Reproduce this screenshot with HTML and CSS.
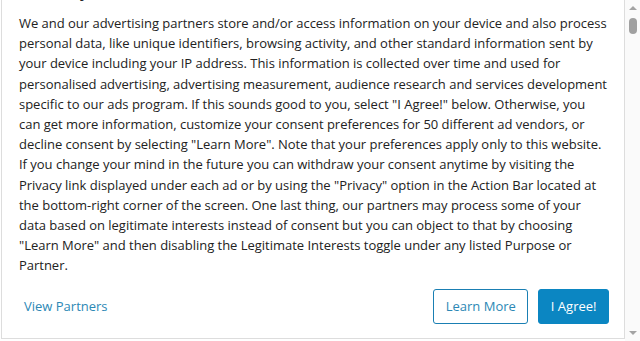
FILE: index.html
```html
<!DOCTYPE html>
<html lang="en">
<head>
    <meta charset="UTF-8">
    <meta name="viewport" content="width=device-width, initial-scale=1.0">
    <title>Privacy</title>
    <link rel="stylesheet" href="styles.css">
</head>
<body>
    <div class="page">
        <div class="dialog">
            <h2 class="title">Privacy</h2>
            <p class="notice">
                We and our advertising partners store and/or access information on your device and also process<br>
                personal data, like unique identifiers, browsing activity, and other standard information sent by<br>
                your device including your IP address. This information is collected over time and used for<br>
                personalised advertising, advertising measurement, audience research and services development<br>
                specific to our ads program. If this sounds good to you, select "I Agree!" below. Otherwise, you<br>
                can get more information, customize your consent preferences for 50 different ad vendors, or<br>
                decline consent by selecting "Learn More". Note that your preferences apply only to this website.<br>
                If you change your mind in the future you can withdraw your consent anytime by visiting the<br>
                Privacy link displayed under each ad or by using the "Privacy" option in the Action Bar located at<br>
                the bottom-right corner of the screen. One last thing, our partners may process some of your<br>
                data based on legitimate interests instead of consent but you can object to that by choosing<br>
                "Learn More" and then disabling the Legitimate Interests toggle under any listed Purpose or<br>
                Partner.
            </p>
            <div class="actions">
                <a class="link" href="#">View Partners</a>
                <div class="buttons">
                    <button class="btn btn-outline">Learn More</button>
                    <button class="btn btn-primary">I Agree!</button>
                </div>
            </div>
        </div>
        <div class="scrollbar">
            <div class="arrow arrow-up"></div>
            <div class="track">
                <div class="thumb"></div>
            </div>
            <div class="arrow arrow-down"></div>
        </div>
    </div>
</body>
</html>
```

FILE: styles.css
```css
/* Consent dialog */
body {
    margin: 0;
    font-family: "Open Sans", "Liberation Sans", sans-serif;
    background-color: #fff;
    color: #222;
}

.page {
    display: flex;
    height: 341px;
}

.dialog {
    flex: 1;
    height: 338px;
    overflow: hidden;
    margin-left: 1px;
    border: 1px solid #ddd;
    border-top: none;
    padding: 0 15px 0 17px;
}

.title {
    font-size: 15px;
    font-weight: 600;
    line-height: 22px;
    margin: -19px 0 10px 17px;
}

.notice {
    font-size: 13px;
    letter-spacing: -0.02px;
    line-height: 20.2px;
    white-space: nowrap;
    margin: 0;
}

.actions {
    display: flex;
    align-items: center;
    justify-content: space-between;
    margin-top: 13px;
}

.link {
    color: #2c88b5;
    font-size: 13px;
    text-decoration: none;
    margin-left: 5px;
}

.buttons {
    display: flex;
    gap: 10px;
}

.btn {
    font-family: inherit;
    font-size: 13px;
    height: 35px;
    padding: 0 11.5px;
    border-radius: 3px;
    cursor: pointer;
}

.btn-outline {
    background-color: #fff;
    color: #2c88b5;
    border: 1px solid #1a7fb3;
}

.btn-primary {
    background-color: #0b86c2;
    color: #fff;
    border: 1px solid #0b86c2;
}

.scrollbar {
    width: 15px;
    background-color: #fafafa;
    display: flex;
    flex-direction: column;
    align-items: center;
}

.arrow {
    width: 0;
    height: 0;
    border-left: 4px solid transparent;
    border-right: 4px solid transparent;
}

.arrow-up {
    margin-top: 6px;
    border-bottom: 4px solid #a3a3a3;
}

.arrow-down {
    margin-bottom: 6px;
    border-top: 4px solid #a3a3a3;
}

.track {
    flex: 1;
    width: 100%;
    display: flex;
    justify-content: center;
    padding-top: 8px;
}

.thumb {
    width: 8px;
    height: 16px;
    border-radius: 4px;
    background-color: #a0a0a0;
}
```
